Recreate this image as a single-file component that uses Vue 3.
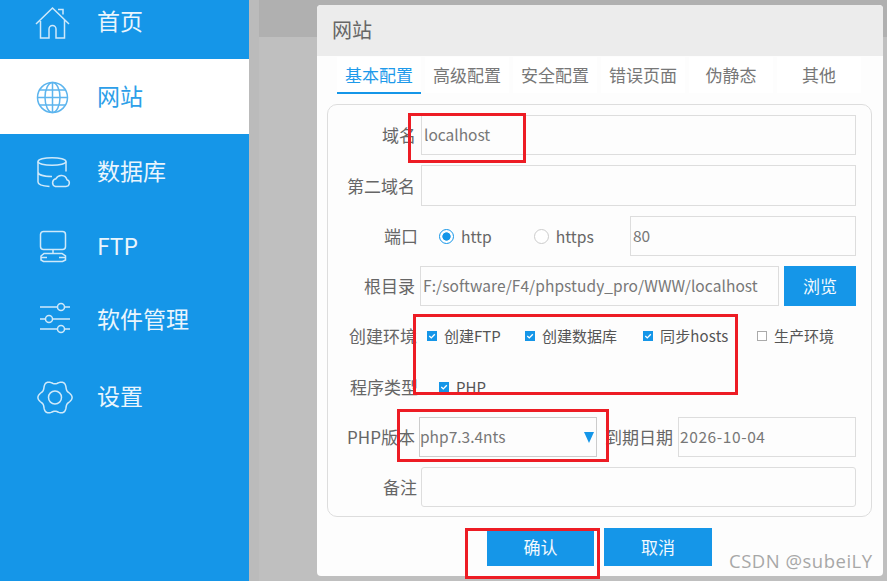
<script setup>
const tabs = ['基本配置', '高级配置', '安全配置', '错误页面', '伪静态', '其他']
const gearPoints = Array.from({ length: 96 }, (_, i) => {
  const t = (i / 96) * Math.PI * 2
  const r = 15.4 + 1.7 * Math.cos(6 * t)
  return `${(22 + r * Math.cos(t)).toFixed(2)},${(20.5 + r * Math.sin(t)).toFixed(2)}`
}).join(' ')
const marks = ['m1', 'm2', 'm3', 'm4']
const checks = [
  { cls: 'a', on: true, text: '创建FTP' },
  { cls: 'b', on: true, text: '创建数据库' },
  { cls: 'c', on: true, text: '同步hosts' },
  { cls: 'd', on: false, text: '生产环境' }
]
</script>

<template>
  <div class="screen">
    <aside class="sidebar">
      <ul class="menu">
        <li class="item">
          <svg class="icon" viewBox="0 0 40 40">
            <path d="M3 22 19.500 6 36 22M30 12.500V7.500h-5M7.500 19v17h8.500v-9a3.500 3.500 0 0 1 7 0v9h8.500V18" />
          </svg>
          <span>首页</span>
        </li>
        <li class="item active">
          <svg class="icon" viewBox="0 0 40 40">
            <circle cx="19.500" cy="20.500" r="15" />
            <ellipse cx="19.500" cy="20.500" rx="7.500" ry="15" />
            <path d="M19.500 5.500v30M4.500 20.500h30M6.500 13h26M6.500 28h26" />
          </svg>
          <span>网站</span>
        </li>
        <li class="item">
          <svg class="icon" viewBox="0 0 40 40">
            <ellipse cx="19" cy="9.500" rx="14" ry="3.800" />
            <path d="M5 9.500v20.500c0 2.500 5 4 11.500 4.500M33 9.500v10M5 20c0 2.800 6 4.500 14 4.500" />
            <path d="M22.500 34.500h10.500a3.500 3.500 0 0 0 1-6.800 6 6 0 0 0-11-1 4 4 0 0 0-.5 7.800Z" />
          </svg>
          <span>数据库</span>
        </li>
        <li class="item">
          <svg class="icon" viewBox="0 0 40 40">
            <rect x="7.500" y="4.500" width="25" height="18" rx="3" />
            <path d="M20 22.500v4M11 26.500h18l3.500 2.500v4l-3 1.500h-19l-2.500-1.500v-4ZM8 30.500h6M26 30.500h6.500" />
          </svg>
          <span>FTP</span>
        </li>
        <li class="item">
          <svg class="icon" viewBox="0 0 40 40">
            <path d="M7 8h17.500M31.500 8H37M7 20h5.500M19.500 20H37M7 30h17.500M31.500 30H37" />
            <circle cx="28" cy="8" r="3.500" />
            <circle cx="16" cy="20" r="3.500" />
            <circle cx="28" cy="30" r="3.500" />
          </svg>
          <span>软件管理</span>
        </li>
        <li class="item">
          <svg class="icon" viewBox="0 0 44 40">
            <polygon :points="gearPoints" />
            <circle cx="22" cy="20.500" r="6.500" />
          </svg>
          <span>设置</span>
        </li>
      </ul>
    </aside>

    <main class="main">
      <section class="dialog">
        <header class="dialog-head">网站</header>
        <nav class="tabs">
          <a v-for="(tab, i) in tabs" :key="tab" class="tab" :class="{ current: i === 0 }">{{ tab }}</a>
        </nav>
        <form class="form" @submit.prevent>
          <div class="row">
            <label class="label s1">域名</label>
            <div class="field">localhost</div>
          </div>
          <div class="row tall">
            <label class="label">第二域名</label>
            <div class="field"></div>
          </div>
          <div class="row">
            <label class="label s3">端口</label>
            <div class="radios">
              <span class="radio on"></span><span class="radio-text">http</span>
              <span class="radio second"></span><span class="radio-text">https</span>
            </div>
            <div class="field port">80</div>
          </div>
          <div class="row">
            <label class="label">根目录</label>
            <div class="field root">F:/software/F4/phpstudy_pro/WWW/localhost</div>
            <button class="btn browse" type="button">浏览</button>
          </div>
          <div class="row">
            <label class="label s2">创建环境</label>
            <div class="checks">
              <span v-for="c in checks" :key="c.cls" class="check" :class="[c.cls, { on: c.on }]">
                <i><svg v-if="c.on" viewBox="0 0 11 11"><path d="M2.500 5.500 4.700 7.600 8.600 3.600" /></svg></i>{{ c.text }}
              </span>
            </div>
          </div>
          <div class="row tall">
            <label class="label s3">程序类型</label>
            <div class="checks single">
              <span class="check on"><i><svg viewBox="0 0 11 11"><path d="M2.500 5.500 4.700 7.600 8.600 3.600" /></svg></i>PHP</span>
            </div>
          </div>
          <div class="row">
            <label class="label">PHP版本</label>
            <div class="select">php7.3.4nts<b></b></div>
            <label class="date-label">到期日期</label>
            <div class="field date">2026-10-04</div>
          </div>
          <div class="row">
            <label class="label s2">备注</label>
            <div class="field notes"></div>
          </div>
        </form>
        <footer class="actions">
          <button class="btn wide" type="button">确认</button>
          <button class="btn wide" type="button">取消</button>
        </footer>
      </section>
    </main>

    <div v-for="m in marks" :key="m" class="mark" :class="m"></div>
    <div class="watermark">CSDN @subeiLY</div>
  </div>
</template>

<style>
html, body { margin: 0; padding: 0; background: #bcbcbc; }
</style>

<style scoped>
.screen {
  position: relative;
  display: flex;
  width: 887px;
  height: 581px;
  overflow: hidden;
  font-family: "Noto Sans CJK SC", "Noto Sans", sans-serif;
  color: #666;
}
.sidebar { width: 249px; flex: none; background: #1596e8; }
.menu { list-style: none; margin: -16px 0 0; padding: 0; }
.item {
  display: flex;
  align-items: center;
  gap: 24px;
  height: 75px;
  padding-left: 33px;
  color: #eaf5fd;
  font-size: 23px;
  line-height: 1;
}
.item span { position: relative; top: -1px; }
.item:nth-child(5) { height: 70px; }
.item:nth-child(6) { height: 85px; }
.item:nth-child(6) .icon { width: 44px; margin-right: -4px; }
.item.active { background: #fff; color: #2d9fe9; }
.icon {
  width: 40px;
  height: 40px;
  flex: none;
  fill: none;
  stroke: #cfe9fa;
  stroke-width: 1.500;
}
.active .icon { stroke: #5db5ee; }
.main {
  flex: 1;
  padding: 5px 0 0 68px;
  background:
    linear-gradient(#b0b0b0, #b0b0b0) 10px 0 / 100% 37px no-repeat,
    linear-gradient(#bfbfbf, #bfbfbf) 10px 0 / 100% 100% no-repeat,
    #bbb;
}
.dialog {
  display: flex;
  flex-direction: column;
  width: 566px;
  height: 571px;
  border-radius: 4px;
  background: #fdfdfd;
  overflow: hidden;
}
.dialog-head {
  height: 51px;
  flex: none;
  padding: 0 0 2px 15px;
  box-sizing: border-box;
  background: #ececec;
  font-size: 20px;
  line-height: 49px;
  color: #666;
}
.tabs { display: flex; gap: 4px; height: 37px; flex: none; margin: 1px 0 0 20px; }
.tab {
  width: 84px;
  height: 36px;
  background: #fff;
  text-align: center;
  font-size: 17px;
  line-height: 36px;
  color: #777;
}
.tab.current { color: #1e9aea; border-bottom: 2px solid #1596e8; height: 35px; }
.form {
  display: flex;
  flex-direction: column;
  gap: 10px;
  width: 545px;
  height: 413px;
  box-sizing: border-box;
  margin: 10px 0 0 10px;
  padding: 10px 15px 0 0;
  border: 1px solid #ddd;
  border-radius: 10px;
}
.row { display: flex; align-items: center; height: 40px; }
.row.tall { height: 41px; }
.label {
  width: 87px;
  flex: none;
  margin-right: 6px;
  padding-bottom: 1px;
  text-align: right;
  font-size: 17px;
  white-space: nowrap;
}
.label.s1 { width: 88px; margin-right: 5px; }
.label.s2 { width: 89px; margin-right: 4px; }
.label.s3 { width: 90px; margin-right: 3px; }
.field {
  flex: 1;
  align-self: stretch;
  box-sizing: border-box;
  padding-left: 2px;
  border: 1px solid #ddd;
  font-size: 15.500px;
  line-height: 36px;
  color: #777;
  white-space: nowrap;
}
.radios { display: flex; align-items: center; width: 209px; flex: none; padding-left: 18px; box-sizing: border-box; }
.radio {
  width: 15px;
  height: 15px;
  flex: none;
  box-sizing: border-box;
  border: 1px solid #ccc;
  border-radius: 50%;
  background: #fff;
}
.radio.on { border-color: #1596e8; background: radial-gradient(circle, #1596e8 0 3.800px, #fff 4.500px); }
.radio.second { margin-left: 42px; }
.radio-text { margin-left: 7px; font-size: 15.700px; color: #666; }
.root { flex: none; width: 359px; margin-left: -1px; padding-left: 2px; letter-spacing: .07px; }
.btn {
  border: 0;
  background: #1596e8;
  color: #f2f9fe;
  font-family: inherit;
  font-size: 17px;
  padding: 0 0 2px;
}
.browse { width: 72px; align-self: stretch; margin-left: 5px; }
.checks { flex: 1; position: relative; height: 100%; }
.check {
  position: absolute;
  top: 50%;
  transform: translateY(-50%);
  display: flex;
  align-items: center;
  gap: 7px;
  padding-bottom: 1px;
  font-size: 15px;
  color: #555;
  white-space: nowrap;
}
.check i {
  display: block;
  width: 10px;
  height: 10px;
  flex: none;
  box-sizing: border-box;
  border: 1px solid #aaa;
  background: #fff;
  margin-top: 1px;
}
.check.on i { border: 0; background: #1596e8; }
.check svg { display: block; width: 10px; height: 10px; fill: none; stroke: #fff; stroke-width: 1.500; }
.a { left: 6px; }
.b { left: 104px; }
.c { left: 222px; letter-spacing: .15px; }
.d { left: 336px; }
.single .check { left: 18px; }
.select {
  position: relative;
  flex: none;
  align-self: stretch;
  width: 178px;
  box-sizing: border-box;
  margin-left: -2px;
  padding-left: 0;
  border: 1px solid #ccc;
  font-size: 15.500px;
  line-height: 36px;
  color: #777;
}
.select b {
  position: absolute;
  right: 2px;
  top: 14px;
  width: 0;
  height: 0;
  border-left: 5.500px solid transparent;
  border-right: 5.500px solid transparent;
  border-top: 11px solid #1596e8;
}
.date-label { flex: none; width: 70px; margin: 0 5px 0 6px; padding-bottom: 1px; text-align: right; font-size: 17px; white-space: nowrap; }
.date { padding-left: 1px; letter-spacing: .6px; }
.notes { border-radius: 3px; }
.actions { display: flex; justify-content: flex-start; gap: 10px; margin: 11px 0 0 170px; }
.wide { width: 107px; height: 38px; }
.wide + .wide { width: 108px; }
.mark { position: absolute; box-sizing: border-box; border: 3px solid #ed1c24; pointer-events: none; }
.m1 { left: 408px; top: 113px; width: 118px; height: 50px; }
.m2 { left: 413px; top: 314px; width: 325px; height: 81px; }
.m3 { left: 397px; top: 409px; width: 212px; height: 53px; }
.m4 { left: 465px; top: 528px; width: 135px; height: 51px; }
.watermark {
  position: absolute;
  left: 729px;
  top: 548px;
  font-family: "Open Sans", sans-serif;
  font-size: 18.500px;
  letter-spacing: 0.500px;
  line-height: 26px;
  color: #999;
  white-space: nowrap;
  opacity: .85;
}
</style>
